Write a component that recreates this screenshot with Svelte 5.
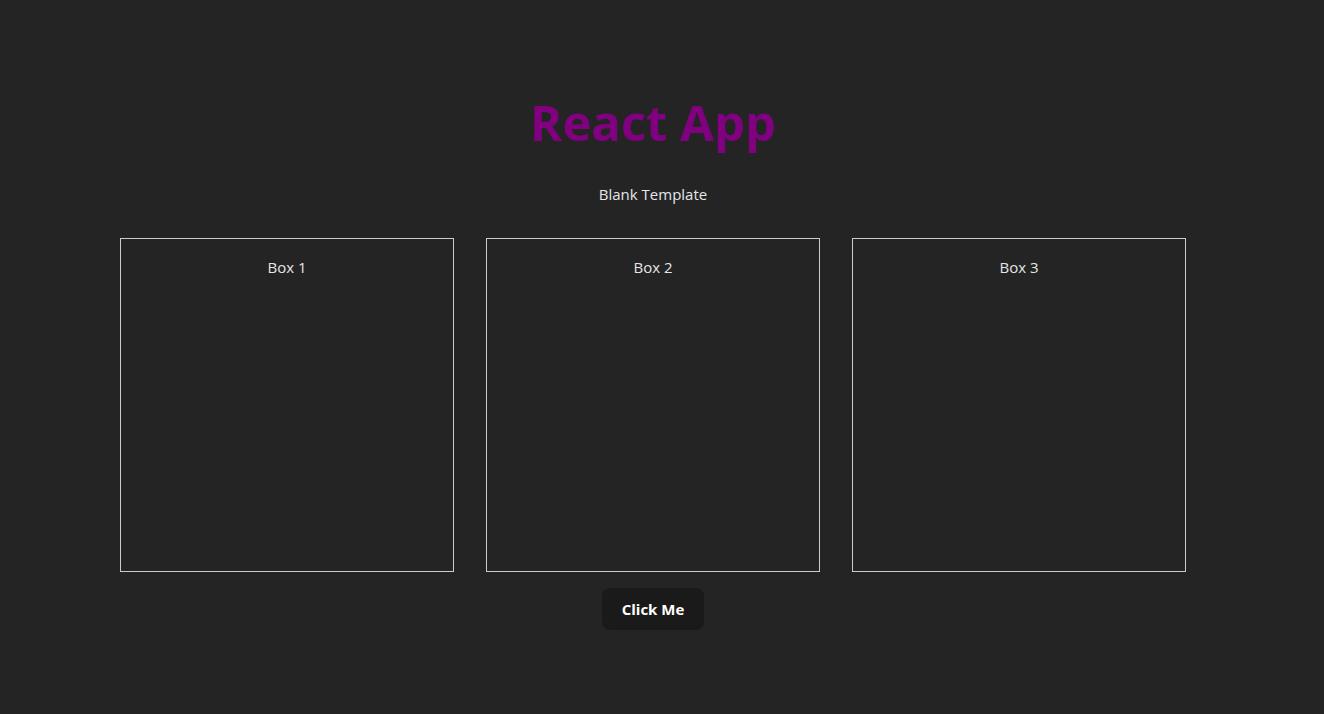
<script>
  const boxes = ['Box 1', 'Box 2', 'Box 3'];
</script>

<main>
  <h1>React App</h1>
  <p>Blank Template</p>
  <div class="boxes">
    {#each boxes as box}
      <section class="box"><p>{box}</p></section>
    {/each}
  </div>
  <button type="button">Click Me</button>
</main>

<style>
  :global(html) {
    background: #242424;
  }

  :global(body) {
    margin: 0;
    color: #e6e6e6;
    font: 15px/24px "Open Sans", "Noto Sans", sans-serif;
  }

  main {
    box-sizing: border-box;
    min-height: 100vh;
    padding: 87px 138px 84px 120px;
    display: flex;
    flex-direction: column;
    align-items: center;
    text-align: center;
  }

  h1 {
    margin: 0 0 25px;
    color: purple;
    font-size: 49px;
    line-height: 70px;
    font-weight: 700;
  }

  p {
    margin: 0;
  }

  .boxes {
    align-self: stretch;
    display: grid;
    grid-template-columns: repeat(3, 1fr);
    gap: 32px;
    margin: 32px 0 16px;
  }

  .box {
    box-sizing: border-box;
    aspect-ratio: 1;
    padding: 16px;
    border: 1px solid #ccc;
  }

  button {
    padding: 9px 20px;
    border: 0;
    border-radius: 8px;
    background: #1a1a1a;
    color: #fff;
    font: inherit;
    font-weight: 700;
    cursor: pointer;
  }
</style>
